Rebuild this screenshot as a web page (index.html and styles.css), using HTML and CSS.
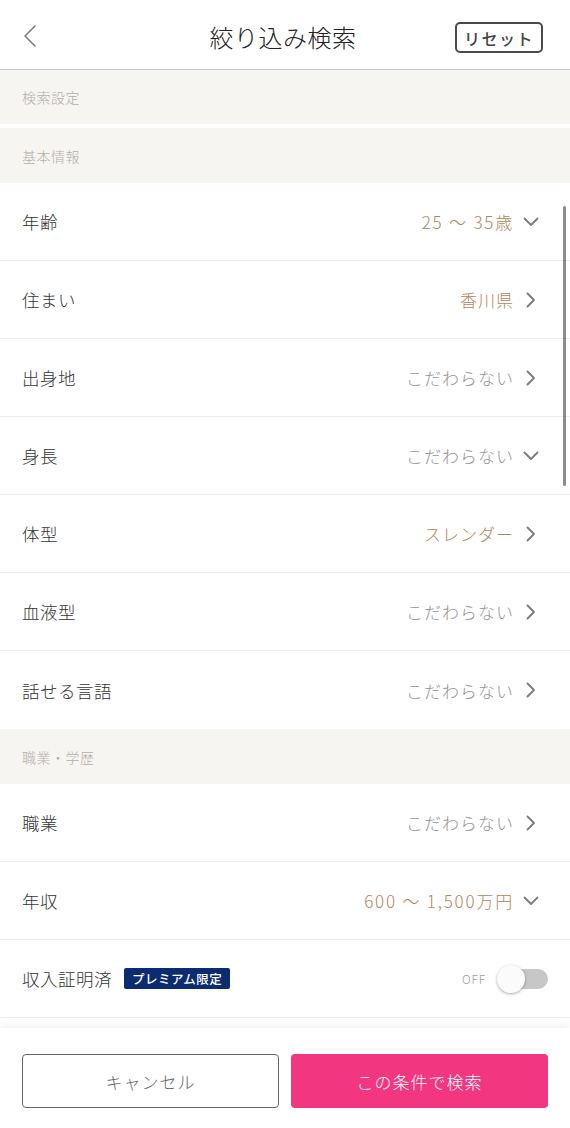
FILE: index.html
```html
<!DOCTYPE html>
<html lang="ja">
<head>
<meta charset="utf-8">
<title>絞り込み検索</title>
<link rel="stylesheet" href="styles.css">
</head>
<body>
<div class="page">
  <header class="topbar">
    <div class="back">
      <svg width="14" height="22" viewBox="0 0 14 22"><path d="M12 1 L2 11 L12 21" fill="none" stroke="#7a7a7a" stroke-width="1.5" stroke-linecap="round" stroke-linejoin="round"/></svg>
    </div>
    <h1 class="title">絞り込み検索</h1>
    <div class="reset-wrap"><span class="reset">リセット</span></div>
  </header>

  <main class="list">
    <div class="section-head first">検索設定</div>
    <div class="section-head">基本情報</div>

    <div class="row"><span class="label">年齢</span><span class="value sel num">25 〜 35歳</span><span class="icon"><svg width="16" height="10" viewBox="0 0 16 10"><path d="M1.5 1.5 L8 8 L14.5 1.5" fill="none" stroke="#7a7a7a" stroke-width="1.8" stroke-linecap="round" stroke-linejoin="round"/></svg></span></div>
    <div class="row"><span class="label">住まい</span><span class="value sel">香川県</span><span class="icon"><svg width="10" height="16" viewBox="0 0 10 16"><path d="M1.5 1.5 L8 8 L1.5 14.5" fill="none" stroke="#7a7a7a" stroke-width="1.8" stroke-linecap="round" stroke-linejoin="round"/></svg></span></div>
    <div class="row"><span class="label">出身地</span><span class="value">こだわらない</span><span class="icon"><svg width="10" height="16" viewBox="0 0 10 16"><path d="M1.5 1.5 L8 8 L1.5 14.5" fill="none" stroke="#7a7a7a" stroke-width="1.8" stroke-linecap="round" stroke-linejoin="round"/></svg></span></div>
    <div class="row"><span class="label">身長</span><span class="value">こだわらない</span><span class="icon"><svg width="16" height="10" viewBox="0 0 16 10"><path d="M1.5 1.5 L8 8 L14.5 1.5" fill="none" stroke="#7a7a7a" stroke-width="1.8" stroke-linecap="round" stroke-linejoin="round"/></svg></span></div>
    <div class="row"><span class="label">体型</span><span class="value sel">スレンダー</span><span class="icon"><svg width="10" height="16" viewBox="0 0 10 16"><path d="M1.5 1.5 L8 8 L1.5 14.5" fill="none" stroke="#7a7a7a" stroke-width="1.8" stroke-linecap="round" stroke-linejoin="round"/></svg></span></div>
    <div class="row"><span class="label">血液型</span><span class="value">こだわらない</span><span class="icon"><svg width="10" height="16" viewBox="0 0 10 16"><path d="M1.5 1.5 L8 8 L1.5 14.5" fill="none" stroke="#7a7a7a" stroke-width="1.8" stroke-linecap="round" stroke-linejoin="round"/></svg></span></div>
    <div class="row last"><span class="label">話せる言語</span><span class="value">こだわらない</span><span class="icon"><svg width="10" height="16" viewBox="0 0 10 16"><path d="M1.5 1.5 L8 8 L1.5 14.5" fill="none" stroke="#7a7a7a" stroke-width="1.8" stroke-linecap="round" stroke-linejoin="round"/></svg></span></div>

    <div class="section-head">職業・学歴</div>
    <div class="row"><span class="label">職業</span><span class="value">こだわらない</span><span class="icon"><svg width="10" height="16" viewBox="0 0 10 16"><path d="M1.5 1.5 L8 8 L1.5 14.5" fill="none" stroke="#7a7a7a" stroke-width="1.8" stroke-linecap="round" stroke-linejoin="round"/></svg></span></div>
    <div class="row"><span class="label">年収</span><span class="value sel num">600 〜 1,500万円</span><span class="icon"><svg width="16" height="10" viewBox="0 0 16 10"><path d="M1.5 1.5 L8 8 L14.5 1.5" fill="none" stroke="#7a7a7a" stroke-width="1.8" stroke-linecap="round" stroke-linejoin="round"/></svg></span></div>
    <div class="row toggle-row"><span class="label">収入証明済</span><span class="badge">プレミアム限定</span><span class="off">OFF</span><span class="switch"><span class="knob"></span></span></div>

    <div class="scrollbar"></div>
  </main>

  <footer class="footer">
    <button class="btn cancel">キャンセル</button>
    <button class="btn search">この条件で検索</button>
  </footer>
</div>
</body>
</html>
```

FILE: styles.css
```css
* { box-sizing: border-box; }
html, body { margin: 0; padding: 0; background: #fff; }
body {
  font-family: "Noto Sans CJK JP", "Noto Sans", sans-serif;
  color: #333;
}
.page {
  width: 570px;
  height: 1128px;
  display: grid;
  grid-template-rows: 70px 1fr auto;
  overflow: hidden;
}
.topbar {
  display: grid;
  grid-template-columns: 1fr auto 1fr;
  align-items: center;
  border-bottom: 1px solid #c9c9c9;
  padding: 0 27px 0 23px;
  height: 70px;
}
.back { display: flex; align-items: center; padding-top: 2px; }
.title {
  margin: 0;
  font-size: 24px;
  font-weight: 300;
  color: #222;
  letter-spacing: 0.5px;
  padding-top: 4px;
}
.reset-wrap { display: flex; justify-content: flex-end; padding-top: 6px; }
.reset {
  display: inline-flex;
  align-items: center;
  justify-content: center;
  width: 88px;
  height: 31px;
  border: 2px solid #4a4a4a;
  border-radius: 5px;
  font-size: 16px;
  font-weight: 500;
  color: #444;
  letter-spacing: 1.5px;
}
.list {
  position: relative;
  overflow: hidden;
}
.section-head {
  height: 55px;
  background: #f7f5f2;
  display: flex;
  align-items: center;
  padding-left: 22px;
  font-size: 14px;
  font-weight: 300;
  color: #b3aeaa;
  letter-spacing: 0.5px;
}
.section-head.first { height: 54px; margin-bottom: 4px; }
.row {
  height: 78px;
  border-bottom: 1px solid #ececec;
  display: flex;
  align-items: center;
  padding: 0 30px 0 22px;
}
.row.last { border-bottom: none; }
.label {
  font-size: 17.5px;
  font-weight: 300;
  color: #333;
  letter-spacing: 0.5px;
}
.value {
  margin-left: auto;
  font-size: 17px;
  font-weight: 300;
  color: #929292;
  letter-spacing: 1px;
}
.value.sel { color: #b4855a; }
.value.num { letter-spacing: 1.8px; }
.icon {
  width: 18px;
  margin-left: 8px;
  display: flex;
  justify-content: center;
  align-items: center;
}
.toggle-row { padding-right: 22px; }
.badge {
  margin-left: 12px;
  background: #0c2c72;
  color: #fff;
  font-size: 12.5px;
  font-weight: 500;
  padding: 1px 8px;
  height: 21px;
  display: inline-flex;
  align-items: center;
  border-radius: 2px;
  letter-spacing: 0.5px;
}
.off {
  margin-left: auto;
  font-size: 12px;
  font-weight: 300;
  color: #9d9d9d;
  letter-spacing: 0.8px;
}
.switch {
  position: relative;
  width: 50px;
  height: 20px;
  margin-left: 12px;
  background: #c7c7c7;
  border-radius: 10px;
}
.knob {
  position: absolute;
  left: -1px;
  top: -4px;
  width: 28px;
  height: 28px;
  border-radius: 50%;
  background: #fbfbfb;
  box-shadow: 0 1px 3px rgba(0,0,0,0.35);
}
.scrollbar {
  position: absolute;
  right: 4px;
  top: 136px;
  width: 3px;
  height: 280px;
  border-radius: 2px;
  background: rgba(0,0,0,0.45);
}
.footer {
  height: 100px;
  box-shadow: 0 -4px 7px rgba(0,0,0,0.045);
  background: #fff;
  display: grid;
  grid-template-columns: 1fr 1fr;
  gap: 12px;
  padding: 26px 22px 20px;
  position: relative;
}
.btn {
  height: 54px;
  border-radius: 4px;
  font-family: "Noto Sans CJK JP", "Noto Sans", sans-serif;
  font-size: 17px;
  font-weight: 300;
  letter-spacing: 1px;
  cursor: pointer;
}
.cancel {
  background: #fff;
  border: 1px solid #666;
  color: #666;
}
.search {
  background: #f2367f;
  border: none;
  color: #fff;
}
```
